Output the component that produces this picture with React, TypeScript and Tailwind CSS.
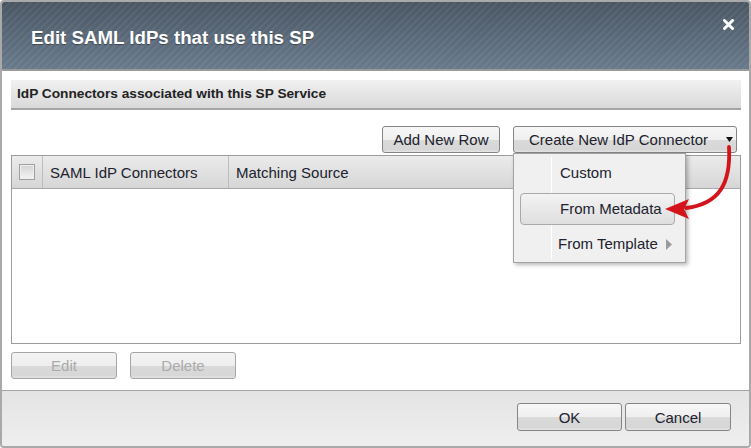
import type { ReactNode } from "react";

const baseFont = "font-['Liberation_Sans',Arial,sans-serif]";

interface BtnProps {
  label: string;
  disabled?: boolean;
  className?: string;
  children?: ReactNode;
}

function GlossButton({ label, disabled, className = "", children }: BtnProps) {
  const tone = disabled
    ? "border-[#a6a6a6] text-[#aaaaaa] bg-[linear-gradient(to_bottom,#f3f3f3_0%,#eeeeee_50%,#d9d9d9_52%,#d7d7d7_90%,#e4e4e4_100%)]"
    : "border-[#858585] text-[#20222e] bg-[linear-gradient(to_bottom,#f7f7f7_0%,#efefef_50%,#dadada_52%,#d6d6d6_90%,#e6e6e6_100%)]";
  return (
    <button
      type="button"
      disabled={disabled}
      className={`h-[27px] rounded-[3px] border text-[15px] leading-none flex items-center ${tone} ${className}`}
    >
      {children ?? <span className="w-full text-center">{label}</span>}
    </button>
  );
}

function ConnectorMenu() {
  return (
    <div className="absolute left-0 top-[27px] z-10 w-[173px] h-[110px] border border-[#a3a3a3] bg-[#f0f0f0] shadow-[2px_2px_4px_rgba(0,0,0,0.28)]">
      <div className="absolute left-[37px] top-[3px] bottom-[3px] w-px bg-[#d6d6d6] border-r border-white" />
      <div className="relative flex flex-col px-[6px] text-[15px] text-[#20222e]">
        <div className="mt-[3px] h-[32px] flex items-center pl-[40px] pt-[1px]">Custom</div>
        <div className="mt-[4px] h-[32px] flex items-center pl-[39px] mr-[4px] rounded-[4px] border border-[#a9a9a9] bg-[linear-gradient(to_bottom,#f3f3f3,#dedede)]">
          From Metadata
        </div>
        <div className="mt-[2px] h-[34px] flex items-center justify-between pl-[38px] pr-[7px]">
          <span>From Template</span>
          <svg width="6" height="11" viewBox="0 0 6 11">
            <path d="M0 0 L6 5.5 L0 11 Z" fill="#9b9b9b" />
          </svg>
        </div>
      </div>
    </div>
  );
}

export default function App() {
  return (
    <div className={`relative w-[751px] h-[448px] bg-white ${baseFont}`}>
      <div className="w-full h-full flex flex-col border-2 border-[#a9a9a9] rounded-[4px] overflow-hidden">
        {/* title bar */}
        <div className="h-[69px] shrink-0 flex justify-between border-b-2 border-[#9a9a9a] bg-[image:repeating-linear-gradient(135deg,rgba(255,255,255,0.055)_0px,rgba(255,255,255,0.055)_2px,transparent_2px,transparent_5px),linear-gradient(to_bottom,#4a5663,#687a8c)]">
          <h3 className="pl-[29px] pt-[25px] text-[18.7px] leading-[22px] font-bold text-white [text-shadow:0_1px_1px_rgba(0,0,0,0.35)]">
            Edit SAML IdPs that use this SP
          </h3>
          <button type="button" className="mt-[17px] mr-[15px] h-[11px] w-[11px]">
            <svg width="11" height="11" viewBox="0 0 11 11">
              <path d="M1.5 1.5 L9.5 9.5 M9.5 1.5 L1.5 9.5" stroke="white" strokeWidth="3" strokeLinecap="round" />
            </svg>
          </button>
        </div>

        {/* body */}
        <div className="h-[319px] shrink-0 flex flex-col pl-[9px] pr-[8px] pt-[9px]">
          <div className="h-[30px] flex items-center pl-[6px] pt-[1px] border-b-2 border-[#a6a6a6] bg-[linear-gradient(to_bottom,#f1f1f1,#d9d9d9)] text-[13.7px] font-bold text-[#222]">
            IdP Connectors associated with this SP Service
          </div>

          <div className="mt-[16px] flex justify-end gap-[13px] pr-[4px]">
            <GlossButton label="Add New Row" className="w-[118px]" />
            <div className="relative">
              <GlossButton label="" className="w-[224px] pl-[15px]">
                <span>Create New IdP Connector</span>
                <svg className="ml-[18px]" width="7" height="5" viewBox="0 0 7 5">
                  <path d="M0 0 L7 0 L3.5 5 Z" fill="#111" />
                </svg>
              </GlossButton>
              <ConnectorMenu />
            </div>
          </div>

          <div className="mt-[2px] h-[189px] flex flex-col border border-[#9c9c9c]">
            <div className="h-[33px] shrink-0 flex border-b border-[#a8a8a8] bg-[linear-gradient(to_bottom,#ebebeb,#d6d6d6)] text-[15px] text-[#20222e]">
              <div className="w-[31px] flex items-center justify-center border-r border-[#bdbdbd]">
                <span className="block w-[16px] h-[16px] border border-[#9f9f9f] bg-[linear-gradient(to_bottom,#d3d3d3,#f5f5f5)] shadow-[inset_0_0_0_1px_#eeeeee]" />
              </div>
              <div className="w-[186px] flex items-center pl-[7px] pt-[2px] border-r border-[#bdbdbd]">
                SAML IdP Connectors
              </div>
              <div className="flex-1 flex items-center pl-[7px] pt-[2px]">Matching Source</div>
            </div>
            <div className="flex-1 bg-white" />
          </div>

          <div className="mt-[8px] flex gap-[13px]">
            <GlossButton label="Edit" disabled className="w-[106px]" />
            <GlossButton label="Delete" disabled className="w-[106px]" />
          </div>
        </div>

        {/* footer */}
        <div className="flex-1 flex justify-end gap-[3px] pr-[18px] pt-[12px] border-t border-[#a5a5a5] bg-[linear-gradient(to_bottom,#e4e4e4,#eeeeee)]">
          <GlossButton label="OK" className="w-[105px] h-[28px]" />
          <GlossButton label="Cancel" className="w-[106px] h-[28px]" />
        </div>
      </div>

      {/* red callout arrow */}
      <svg className="absolute inset-0 pointer-events-none z-20" width="751" height="448" viewBox="0 0 751 448">
        <path d="M729 147 C731 184 719 204 686 208" stroke="#d3151b" strokeWidth="3.8" fill="none" strokeLinecap="round" />
        <path d="M665 209 L689 199 L684 209 L689 219 Z" fill="#d3151b" />
      </svg>
    </div>
  );
}
